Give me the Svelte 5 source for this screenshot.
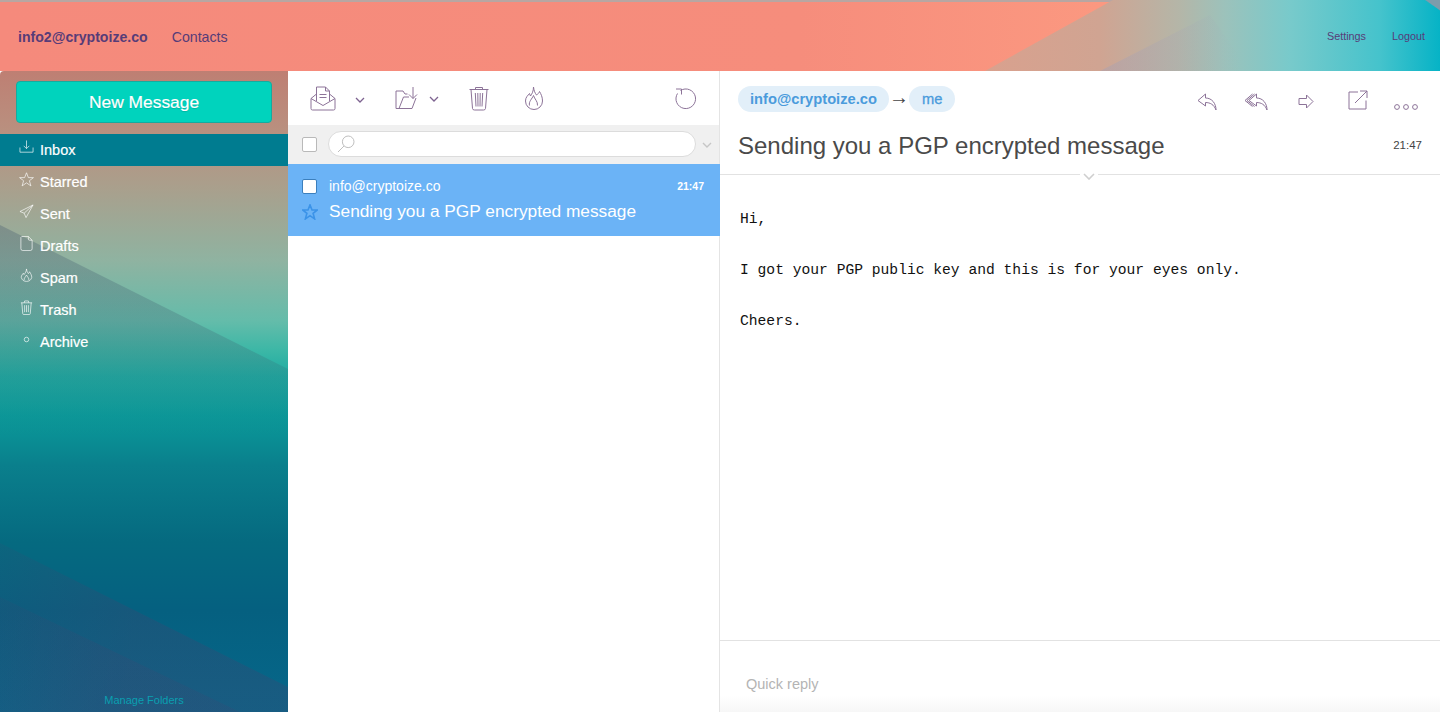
<script>
  const folders = [
    { name: 'Inbox', icon: 'inbox', active: true },
    { name: 'Starred', icon: 'star' },
    { name: 'Sent', icon: 'sent' },
    { name: 'Drafts', icon: 'draft' },
    { name: 'Spam', icon: 'flame' },
    { name: 'Trash', icon: 'trash' },
    { name: 'Archive', icon: 'dot' }
  ];
</script>

<div class="page">
  <header class="topbar">
    <a class="account">info2@cryptoize.co</a>
    <a class="contacts">Contacts</a>
    <div class="top-right">
      <a>Settings</a>
      <a>Logout</a>
    </div>
  </header>

  <main class="panes">
    <aside class="sidebar">
      <div class="stripe"></div>
      <div class="compose-wrap">
        <button class="compose">New Message</button>
      </div>
      <nav class="folders">
        {#each folders as f}
          <div class="folder" class:active={f.active}>
            <svg class="nav-icon" viewBox="0 0 16 16">
              {#if f.icon === 'inbox'}
                <path d="M8 0.5V9M5 6.2L8 9.2L11 6.2M1 8V13H15V8" />
              {:else if f.icon === 'star'}
                <path d="M8 .8L10 6H15.4L11.1 9.3L12.7 14.8L8 11.6L3.3 14.8L4.9 9.3L.6 6H6Z" />
              {:else if f.icon === 'sent'}
                <path d="M15 1L1 8L5.5 9.8L7.5 14.5ZM15 1L5.5 9.8" />
              {:else if f.icon === 'draft'}
                <path d="M3 .5H10L14 4.5V13.5Q14 15.5 12 15.5H4Q2 15.5 2 13.5V1.5ZM10 .5V3.5Q10 4.5 11 4.5H14" />
              {:else if f.icon === 'flame'}
                <path d="M8 1C8.2 3.5 9 4.5 10 6C10.8 5.4 11 4.8 11.2 4C12.6 6 13.6 8 13.6 10A5.8 5.8 0 0 1 2.4 10C2.4 8 3.6 7 4.6 5.6L5.4 7C6.6 5.4 8 3.5 8 1ZM5.5 13C5 11 7 9.5 8 7.5C9 9.5 11 11 10.5 13" />
              {:else if f.icon === 'trash'}
                <path d="M2 3H14M5.5 3L6 1H10L10.5 3M3 3L4 14.5Q4.2 15.5 5 15.5H11Q11.8 15.5 12 14.5L13 3M6 5.5V13M8 5.5V13M10 5.5V13" />
              {:else}
                <circle cx="8" cy="8" r="2.4" />
              {/if}
            </svg>
            <span>{f.name}</span>
          </div>
        {/each}
      </nav>
      <a class="manage">Manage Folders</a>
    </aside>

    <section class="list-pane">
      <div class="list-tools">
        <svg class="tool mail" viewBox="0 0 26 25">
          <path d="M6.5 8L1 12.5V22.5Q1 24 2.5 24H23.5Q25 24 25 22.5V12.5L19.5 8M1 12.5L13 19.5L25 12.5M6.5 15V1H15.5L19.5 5V15M15.5 1V5H19.5M9.5 8.5H16.5M9.5 11.5H16.5" />
        </svg>
        <svg class="chev c1" viewBox="0 0 10 6"><path d="M1 1L5 5L9 1" /></svg>
        <svg class="tool folder-ico" viewBox="0 0 23 24">
          <path d="M1 22.5V5H8L10 8H12.5M4 22.5L8.5 11H14M21 12L17 22.5H1M18 1V12.5M14 8.5L18 12.5L22 8.5" />
        </svg>
        <svg class="chev c2" viewBox="0 0 10 6"><path d="M1 1L5 5L9 1" /></svg>
        <svg class="tool trash" viewBox="0 0 20 25">
          <path d="M.5 3.5H19.5M6.5 3.5V1.5H13.5V3.5M2 3.5L3.5 22.5Q3.7 24 5.5 24H14.5Q16.3 24 16.5 22.5L18 3.5M6.3 7L7 20.5M8.8 7L9 20.5M11.2 7L11 20.5M13.7 7L13 20.5" />
        </svg>
        <svg class="tool flame" viewBox="0 0 18 24">
          <path d="M8.5 1C9 5 10 7 11.5 9C13 8 14 7 14.5 5.5C16 8 17.5 11 17.5 15A8.5 8.5 0 0 1 .5 15C.5 11 3 9.5 4.5 7.5L5.5 10C7 8 8.5 5 8.5 1ZM4.5 19.5C3.5 15.5 7 13 8.5 9.5C9.5 13 13 15.5 12.5 19.5" />
        </svg>
        <svg class="tool refresh" viewBox="0 0 22 23">
          <path d="M5.5 3.5A9.8 9.8 0 1 1 2.5 6.5M1 2H6.5V7.5" />
        </svg>
      </div>

      <div class="search-row">
        <span class="check"></span>
        <div class="search">
          <svg class="search-ico" viewBox="0 0 18 18">
            <circle cx="11.2" cy="6.8" r="5.8" /><path d="M7 11L1 17" />
          </svg>
        </div>
        <svg class="search-chev" viewBox="0 0 10 6"><path d="M1 1L5 5L9 1" /></svg>
      </div>

      <article class="message-row">
        <div class="row-top">
          <span class="check on"></span>
          <span class="sender">info@cryptoize.co</span>
          <span class="row-time">21:47</span>
        </div>
        <div class="row-bottom">
          <svg class="row-star" viewBox="0 0 16 16">
            <path d="M8 .9L10 6H15.3L11.1 9.3L12.6 14.9L8 11.7L3.4 14.9L4.9 9.3L.7 6H6Z" />
          </svg>
          <span class="row-subject">Sending you a PGP encrypted message</span>
        </div>
      </article>
    </section>

    <section class="read-pane">
      <div class="read-head">
        <div class="head-line">
          <div class="people">
            <span class="pill">info@cryptoize.co</span>
            <span class="arrow">→</span>
            <span class="pill me">me</span>
          </div>
          <div class="read-tools">
            <svg class="rt reply" viewBox="0 0 20 18"><path d="M8.5 1L1 7.5L8.5 13V9.5C13 9.5 17 11.5 19 17C19 10.5 15 5 8.5 5Z" /></svg>
            <svg class="rt reply-all" viewBox="0 0 24 18"><path d="M12.5 1L5 7.5L12.5 13V9.5C17 9.5 21 11.5 23 17C23 10.5 19 5 12.5 5ZM8.5 1L1 7.5L8.5 13.5M10.5 1L3 7.5L10.5 13.5" /></svg>
            <svg class="rt forward" viewBox="0 0 16 15"><path d="M8.5 1L15 7.5L8.5 14V10.5H1V4.5H8.5Z" /></svg>
            <svg class="rt external" viewBox="0 0 20 20"><path d="M10 2H1V19H18V10.5M7 13L19 1M12 1H19V8" /></svg>
            <svg class="rt dots" viewBox="0 0 24 6"><circle cx="3" cy="3" r="2.4" /><circle cx="12" cy="3" r="2.4" /><circle cx="21" cy="3" r="2.4" /></svg>
          </div>
        </div>
        <div class="subject-line">
          <h1>Sending you a PGP encrypted message</h1>
          <span class="read-time">21:47</span>
        </div>
      </div>
      <div class="divider">
        <svg viewBox="0 0 12 7"><path d="M1 1L6 6L11 1" /></svg>
      </div>

      <div class="body-text">
        <p>Hi,</p>
        <p>I got your PGP public key and this is for your eyes only.</p>
        <p>Cheers.</p>
      </div>

      <div class="quick-reply">Quick reply</div>
    </section>
  </main>
</div>

<style>
  :global(body) {
    margin: 0;
    font-family: "Liberation Sans", Arial, sans-serif;
  }
  .page {
    height: 712px;
    display: flex;
    flex-direction: column;
    overflow: hidden;
  }

  .topbar {
    height: 71px;
    flex: none;
    position: relative;
    box-sizing: border-box;
    border-top: 2px solid #b8a6a2;
    display: flex;
    align-items: center;
    padding: 0 15px 0 18px;
    color: #573c78;
    background: linear-gradient(90deg, #f58a7c 0, #f68d7c 800px, #fb9880 1100px);
  }
  .topbar::before {
    content: "";
    position: absolute;
    inset: -2px 0 0 0;
    clip-path: polygon(985px 71px, 1113px 0, 1440px 0, 1440px 71px);
    background:
      linear-gradient(215deg, #7d9cab 0, #7d9cab 8px, transparent 9px),
      linear-gradient(90deg, #d9a18e 985px, #d0a492 1100px, #b4b6a8 1180px, #9cc2bb 1225px, #78cacb 1290px, #45c3cc 1380px, #06b3c6 1440px);
  }
  .topbar::after {
    content: "";
    position: absolute;
    inset: -2px 0 0 0;
    clip-path: polygon(1100px 71px, 1210px 15px, 1250px 71px);
    background: linear-gradient(90deg, rgba(160, 160, 185, 0.4) 1100px, rgba(160, 170, 185, 0) 1240px);
  }
  .topbar a {
    position: relative;
    z-index: 1;
  }
  .account {
    font-size: 14.1px;
    font-weight: 700;
    margin-right: 24px;
  }
  .contacts {
    font-size: 14.2px;
  }
  .top-right {
    position: relative;
    z-index: 1;
    margin-left: auto;
    margin-top: -2px;
    display: flex;
    gap: 26px;
    font-size: 10.8px;
  }

  .panes {
    flex: 1;
    min-height: 0;
    display: flex;
  }

  .sidebar {
    width: 288px;
    flex: none;
    position: relative;
    display: flex;
    flex-direction: column;
    border-radius: 4px 0 0 0;
    overflow: hidden;
    background: linear-gradient(180deg, #be7f73 0, #b9907f 60px, #aa9f8c 115px, #8fb3a1 190px, #64bcaa 250px, #3bb7a6 280px, #1eaca2 305px, #0a9a9a 345px, #0a7f8c 395px, #056a80 470px, #056080 540px, #06678a 641px);
  }
  .sidebar::before {
    content: "";
    position: absolute;
    inset: 0;
    background: linear-gradient(180deg, rgba(60, 80, 105, 0.3) 150px, rgba(60, 85, 105, 0.22) 280px, rgba(60, 85, 105, 0) 365px);
    clip-path: polygon(0 154px, 288px 298px, 288px 641px, 0 641px);
  }
  .sidebar::after {
    content: "";
    position: absolute;
    inset: 0;
    background: linear-gradient(100deg, rgba(70, 65, 110, 0.02) 0, rgba(70, 65, 110, 0.28) 230px);
    clip-path: polygon(0 472px, 288px 616px, 288px 641px, 0 641px);
  }
  .stripe {
    position: absolute;
    inset: 0;
    background: linear-gradient(100deg, rgba(70, 65, 110, 0.04) 0, rgba(70, 65, 110, 0.18) 200px);
    clip-path: polygon(0 526px, 240px 641px, 0 641px);
  }
  .compose-wrap {
    position: relative;
    z-index: 1;
    padding: 10px 16px 11px;
  }
  .compose {
    display: block;
    width: 100%;
    height: 42px;
    background: #00d3bd;
    border: 1px solid #15ab9f;
    border-radius: 4px;
    color: #fff;
    font: 17.4px "Liberation Sans", Arial, sans-serif;
    -webkit-text-stroke: 0.2px #fff;
    text-shadow: 0 1px 1px rgba(0, 0, 0, 0.15);
  }
  .folders {
    position: relative;
    z-index: 1;
  }
  .folder {
    height: 32px;
    display: flex;
    align-items: center;
    gap: 6px;
    padding-left: 19px;
    color: #fff;
    font-size: 14.5px;
    -webkit-text-stroke: 0.2px #fff;
  }
  .folder.active {
    background: #007c90;
  }
  .nav-icon {
    width: 15px;
    height: 15px;
    margin-top: -6px;
    fill: none;
    stroke: rgba(255, 255, 255, 0.7);
    stroke-width: 1;
  }
  .manage {
    position: absolute;
    z-index: 1;
    left: 0;
    right: 0;
    bottom: 6px;
    text-align: center;
    font-size: 11px;
    color: #0a9fb0;
  }

  .list-pane {
    width: 432px;
    flex: none;
    box-sizing: border-box;
    background: #fff;
    border-right: 1px solid #e4e4e4;
    display: flex;
    flex-direction: column;
  }
  .list-tools {
    height: 54px;
    flex: none;
    display: flex;
    align-items: center;
    padding-left: 22px;
  }
  .tool {
    fill: none;
    stroke: #8c7398;
    stroke-width: 1;
  }
  .chev {
    width: 10px;
    height: 6px;
    fill: none;
    stroke: #7d6390;
    stroke-width: 1.3;
  }
  .mail { width: 26px; height: 25px; }
  .c1 { margin-left: 19px; margin-top: 3px; }
  .folder-ico { width: 23px; height: 24px; margin-left: 30px; }
  .c2 { margin-left: 11px; margin-top: 2px; }
  .trash { width: 20px; height: 25px; margin-left: 30px; }
  .flame { width: 18px; height: 24px; margin-left: 36px; }
  .refresh { width: 22px; height: 23px; margin-left: auto; margin-right: 22px; }

  .search-row {
    height: 39px;
    flex: none;
    background: #f0f0f0;
    display: flex;
    align-items: center;
    padding-left: 14px;
  }
  .check {
    display: block;
    box-sizing: border-box;
    width: 15px;
    height: 15px;
    flex: none;
    background: #fff;
    border: 1px solid #b9b9b9;
    border-radius: 2px;
  }
  .check.on {
    border-color: #3b7fbd;
  }
  .search {
    box-sizing: border-box;
    width: 368px;
    height: 26px;
    margin: -2px 0 0 11px;
    background: #fff;
    border: 1px solid #dcdcdc;
    border-radius: 13px;
    display: flex;
    align-items: center;
    padding-left: 8px;
  }
  .search-ico {
    width: 18px;
    height: 18px;
    fill: none;
    stroke: #bfbfbf;
    stroke-width: 1;
  }
  .search-chev {
    width: 10px;
    height: 6px;
    margin-left: 6px;
    fill: none;
    stroke: #c6c6c6;
    stroke-width: 1.4;
  }

  .message-row {
    height: 72px;
    box-sizing: border-box;
    background: #6bb3f6;
    color: #fff;
    margin-right: -1px;
    padding: 13px 16px 0 14px;
  }
  .row-top {
    display: flex;
    align-items: center;
    height: 18px;
  }
  .sender {
    font-size: 14px;
    margin-left: 12px;
  }
  .row-time {
    margin-left: auto;
    font-size: 10.5px;
    font-weight: 700;
  }
  .row-bottom {
    display: flex;
    align-items: center;
    margin-top: 4px;
    height: 24px;
  }
  .row-star {
    width: 16px;
    height: 16px;
    flex: none;
    margin-top: 2px;
    fill: none;
    stroke: #3b93e8;
    stroke-width: 1.6;
  }
  .row-subject {
    font-size: 17.3px;
    margin-left: 11px;
  }

  .read-pane {
    flex: 1;
    min-width: 0;
    position: relative;
    box-sizing: border-box;
    background: #fff;
    border-radius: 0 6px 0 0;
    display: flex;
    flex-direction: column;
  }
  .read-head {
    height: 103px;
    box-sizing: border-box;
    flex: none;
    padding: 15px 22px 0 18px;
  }
  .head-line {
    display: flex;
    align-items: flex-start;
    justify-content: space-between;
  }
  .people {
    display: flex;
    align-items: center;
  }
  .pill {
    height: 26px;
    line-height: 26px;
    padding: 0 12px;
    border-radius: 13px;
    background: #e2eff9;
    color: #4a9bdc;
    font-size: 14.7px;
    font-weight: 700;
  }
  .pill.me {
    font-weight: 400;
    padding: 0 13px;
    -webkit-text-stroke: 0.3px #4a9bdc;
  }
  .arrow {
    width: 20px;
    text-align: center;
    font-size: 20px;
    line-height: 26px;
    color: #444;
    margin-top: -4px;
  }
  .read-tools {
    display: flex;
    align-items: flex-start;
  }
  .rt {
    fill: none;
    stroke: #8c7398;
    stroke-width: 1;
  }
  .reply { width: 20px; height: 18px; margin-top: 7px; }
  .reply-all { width: 24px; height: 18px; margin-top: 7px; margin-left: 27px; }
  .forward { width: 16px; height: 15px; margin-top: 8px; margin-left: 30px; }
  .external { width: 20px; height: 20px; margin-top: 4px; margin-left: 34px; }
  .dots { width: 24px; height: 6px; margin-top: 18px; margin-left: 26px; }
  .subject-line {
    display: flex;
    align-items: center;
    justify-content: space-between;
    margin-top: 17px;
  }
  h1 {
    margin: 0;
    font-size: 24px;
    font-weight: 400;
    line-height: 34px;
    color: #4a4a4a;
  }
  .read-time {
    font-size: 11.5px;
    color: #444;
    margin: -2px -4px 0 0;
  }
  .divider {
    position: relative;
    height: 1px;
    background: #e2e2e2;
    flex: none;
  }
  .divider svg {
    position: absolute;
    left: 360px;
    top: -1px;
    width: 12px;
    height: 7px;
    padding: 0 3px;
    background: #fff;
    fill: none;
    stroke: #cfcfcf;
    stroke-width: 1.6;
  }
  .body-text {
    flex: 1;
    padding: 32px 20px 0 20px;
    font-family: "Liberation Mono", "Courier New", monospace;
    font-size: 14.65px;
    line-height: 25px;
    color: #111;
  }
  .body-text p {
    margin: 0 0 26px;
  }
  .quick-reply {
    height: 72px;
    flex: none;
    box-sizing: border-box;
    border-top: 1px solid #e2e2e2;
    padding: 35px 0 0 26px;
    font-size: 14.5px;
    color: #b4b4b4;
    background: linear-gradient(180deg, #fff 55px, #f7f7f7);
  }
</style>
